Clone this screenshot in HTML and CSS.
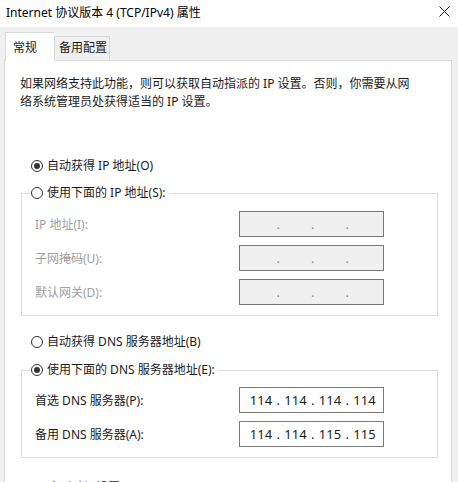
FILE: index.html
```html
<!DOCTYPE html>
<html lang="zh-CN">
<head>
    <meta charset="UTF-8">
    <title>Internet 协议版本 4 (TCP/IPv4) 属性</title>
    <link rel="stylesheet" href="styles.css">
</head>
<body>

    <div class="titlebar">
        <span class="title">Internet 协议版本 4 (TCP/IPv4) 属性</span>
        <svg class="close" width="11" height="11" viewBox="0 0 11 11">
            <path d="M0.5 0.5 L10.5 10.5 M10.5 0.5 L0.5 10.5" stroke="#1a1a1a" stroke-width="1" fill="none"/>
        </svg>
    </div>

    <div class="tabs">
        <div class="tab active">常规</div>
        <div class="tab">备用配置</div>
    </div>

    <div class="panel">
        <p class="desc">如果网络支持此功能，则可以获取自动指派的 IP 设置。否则，你需要从网<br>络系统管理员处获得适当的 IP 设置。</p>

        <label class="radio checked"><span class="dot"></span>自动获得 IP 地址(O)</label>

        <fieldset class="group group-ip">
            <legend><label class="radio"><span class="dot"></span>使用下面的 IP 地址(S):</label></legend>
            <div class="row disabled">
                <span>IP 地址(I):</span>
                <div class="ip"><span></span><i>.</i><span></span><i>.</i><span></span><i>.</i><span></span></div>
            </div>
            <div class="row disabled">
                <span>子网掩码(U):</span>
                <div class="ip"><span></span><i>.</i><span></span><i>.</i><span></span><i>.</i><span></span></div>
            </div>
            <div class="row disabled">
                <span>默认网关(D):</span>
                <div class="ip"><span></span><i>.</i><span></span><i>.</i><span></span><i>.</i><span></span></div>
            </div>
        </fieldset>

        <label class="radio radio-dns"><span class="dot"></span>自动获得 DNS 服务器地址(B)</label>

        <fieldset class="group group-dns">
            <legend><label class="radio checked"><span class="dot"></span>使用下面的 DNS 服务器地址(E):</label></legend>
            <div class="row">
                <span>首选 DNS 服务器(P):</span>
                <div class="ip"><span>114</span><i>.</i><span>114</span><i>.</i><span>114</span><i>.</i><span>114</span></div>
            </div>
            <div class="row">
                <span>备用 DNS 服务器(A):</span>
                <div class="ip"><span>114</span><i>.</i><span>114</span><i>.</i><span>115</span><i>.</i><span>115</span></div>
            </div>
        </fieldset>

        <div class="footer">
            <label class="check"><span class="box"></span>退出时验证设置(L)</label>
            <button class="advanced">高级(V)...</button>
        </div>
    </div>

</body>
</html>
```

FILE: styles.css
```css
body {
    margin: 0;
    background-color: #f0f0f0;
    font-family: "Noto Sans", "Noto Sans CJK SC", sans-serif;
    font-size: 12px;
    color: #1a1a1a;
    overflow: hidden;
}

.titlebar {
    height: 27px;
    box-sizing: border-box;
    background-color: #ffffff;
    display: flex;
    justify-content: space-between;
    align-items: flex-start;
    padding: 4px 8px 0 6px;
}

.title {
    line-height: 17px;
    color: #000;
}

.close {
    margin-top: 2px;
}

.tabs {
    display: flex;
    align-items: flex-end;
    padding: 5px 0 0 5px;
    margin-bottom: -1px;
    position: relative;
    z-index: 1;
}

.tab {
    border: 1px solid #d9d9d9;
    border-bottom: none;
    line-height: 22px;
    height: 23px;
    padding: 0 2px 0 4px;
    margin-bottom: 1px;
}

.tab.active {
    background-color: #ffffff;
    height: 28px;
    line-height: 30px;
    padding: 0 17px 0 7px;
    margin-bottom: 0;
    border-right: none;
}

.panel {
    background-color: #ffffff;
    border: 1px solid #d9d9d9;
    margin: 0 6px 0 4px;
    height: 480px;
}

.desc {
    margin: 0;
    padding: 14px 0 0 15px;
    line-height: 18px;
    white-space: nowrap;
}

.radio {
    display: flex;
    align-items: center;
    gap: 4px;
    height: 20px;
    line-height: 20px;
    white-space: nowrap;
}

.panel > .radio {
    margin: 45px 0 0 26px;
}

.panel > .radio-dns {
    margin-top: 16px;
}

.dot {
    width: 12px;
    height: 12px;
    box-sizing: border-box;
    border: 1px solid #333333;
    border-radius: 50%;
    display: flex;
    align-items: center;
    justify-content: center;
}

.radio.checked .dot::after {
    content: "";
    width: 6px;
    height: 6px;
    border-radius: 50%;
    background-color: #333333;
}

.group {
    border: 1px solid #dcdcdc;
    margin: 7px 13px 0 16px;
    padding: 8px 0 10px 13px;
    min-width: 0;
}

.group-dns {
    margin-top: 8px;
    padding-top: 7px;
}

.group legend {
    margin-left: -5px;
    padding: 0 3px 0 1px;
}

.row {
    display: grid;
    grid-template-columns: 204px 145px;
    align-items: center;
    height: 26px;
    margin-bottom: 8px;
}

.row:last-child {
    margin-bottom: 0;
}

.row.disabled {
    color: #a0a0a0;
}

.ip {
    display: flex;
    height: 26px;
    box-sizing: border-box;
    border: 1px solid #7a7a7a;
    padding-left: 7px;
    align-items: center;
    color: #1a1a1a;
    font-size: 13px;
}

.row.disabled .ip {
    background-color: #f0f0f0;
    border-color: #777777;
    color: #8c8c8c;
}

.ip span {
    width: 28px;
    text-align: center;
}

.ip i {
    font-style: normal;
    width: 6.5px;
    text-align: center;
}

.footer {
    display: flex;
    justify-content: space-between;
    align-items: flex-start;
    margin: 20px 13px 0 15px;
}

.check {
    display: flex;
    align-items: center;
    gap: 3px;
    line-height: 20px;
}

.box {
    width: 13px;
    height: 13px;
    box-sizing: border-box;
    border: 1px solid #333333;
}

.advanced {
    font: inherit;
    background-color: #e1e1e1;
    border: 1px solid #adadad;
    padding: 2px 10px;
    color: #000;
    margin-top: 4px;
}
```
